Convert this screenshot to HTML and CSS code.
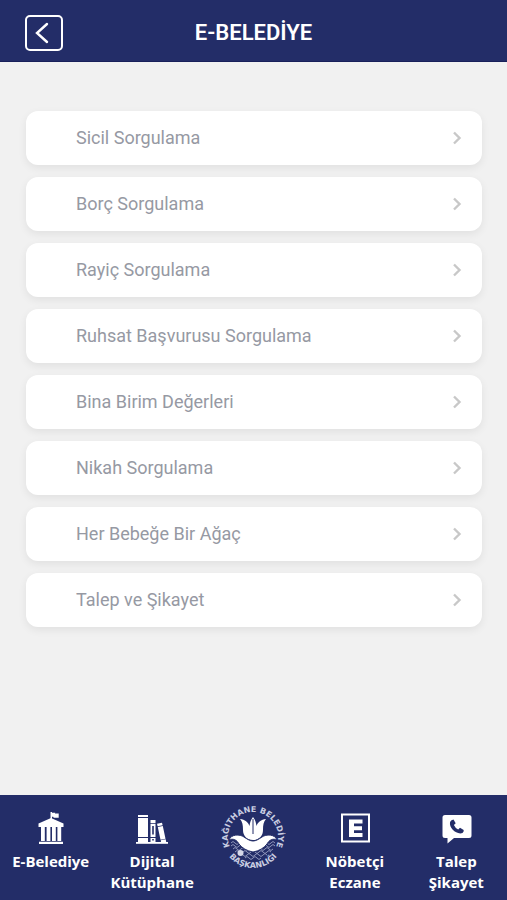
FILE: index.html
```html
<!DOCTYPE html>
<html lang="tr">
<head>
<meta charset="utf-8">
<meta name="viewport" content="width=device-width, initial-scale=1">
<title>E-Belediye</title>
<link rel="stylesheet" href="styles.css">
</head>
<body>
<svg class="symbols" aria-hidden="true">
  <symbol id="chevron" viewBox="0 0 10 14"><path d="M2 1.500 7.500 7 2 12.500" fill="none" stroke="currentColor" stroke-width="2.400"/></symbol>
</svg>
<header class="topbar">
  <button class="back" type="button" aria-label="Geri">
    <svg width="14" height="22" viewBox="0 0 14 22"><path d="M12 2 2 11l10 9" fill="none" stroke="currentColor" stroke-width="2.400" stroke-linecap="round"/></svg>
  </button>
  <h1 class="title">E-BELEDİYE</h1>
</header>
<main class="content">
  <ul class="menu">
    <li><a class="item" href="#">Sicil Sorgulama<svg class="chevron"><use href="#chevron"/></svg></a></li>
    <li><a class="item" href="#">Borç Sorgulama<svg class="chevron"><use href="#chevron"/></svg></a></li>
    <li><a class="item" href="#">Rayiç Sorgulama<svg class="chevron"><use href="#chevron"/></svg></a></li>
    <li><a class="item" href="#">Ruhsat Başvurusu Sorgulama<svg class="chevron"><use href="#chevron"/></svg></a></li>
    <li><a class="item" href="#">Bina Birim Değerleri<svg class="chevron"><use href="#chevron"/></svg></a></li>
    <li><a class="item" href="#">Nikah Sorgulama<svg class="chevron"><use href="#chevron"/></svg></a></li>
    <li><a class="item" href="#">Her Bebeğe Bir Ağaç<svg class="chevron"><use href="#chevron"/></svg></a></li>
    <li><a class="item" href="#">Talep ve Şikayet<svg class="chevron"><use href="#chevron"/></svg></a></li>
  </ul>
</main>
<nav class="tabbar">
  <a class="tab" href="#">
    <svg class="tab-icon" viewBox="0 0 34 34" fill="currentColor">
      <path d="M16.500 1h1.500v.7h3.300l-.4.800h3.800v4.300h-5l-.5-1H18V9h-1.500z"/>
      <path d="M17 7 29.500 12.500v3.500h-25v-3.500z"/>
      <path d="M7 16h3.800v14H7zM12.600 16h3.800v14h-3.800zM18 16h3.800v14H18zM23.400 16h3.800v14h-3.800zM5 30.800h24V33H5z"/>
    </svg>
    <span>E-Belediye</span>
  </a>
  <a class="tab" href="#">
    <svg class="tab-icon" viewBox="0 0 34 34" fill="currentColor">
      <path d="M3 4h10v2H3zM3 7h10v19H3zM3 27h10v4H3z"/>
      <path fill-rule="evenodd" d="M15.500 9h5v3h-5zM15.500 12.800h5V26h-5zM17.200 15v8.500h1.600V15zM15.500 27h5v4h-5zM17.200 28v1.500h1.600V28z"/>
      <path d="m22 12.700 5-1 .6 2.500-5 1zM22.800 16l5-1 2.700 12.800-5 1zM25.700 29.300l5-1 .5 2.700H26z"/>
      <path d="M1 31h32v1.800H1z"/>
    </svg>
    <span>Dijital Kütüphane</span>
  </a>
  <a class="tab tab-logo" href="#" aria-label="Ana sayfa">
    <svg class="logo" viewBox="0 0 70 70">
      <defs>
        <path id="ring-top" d="M22.500 56.600A25 25 0 1 1 47.500 56.600"/>
        <path id="ring-bottom" d="M4 35A31 31 0 0 0 66 35"/>
      </defs>
      <text class="ring"><textPath href="#ring-top" startOffset="50%">KAĞITHANE BELEDİYE</textPath></text>
      <text class="ring"><textPath href="#ring-bottom" startOffset="50%">BAŞKANLIĞI</textPath></text>
      <g class="waves">
        <path d="M13 41q2-3 4 0t4 0 4 0 4 0 4 0 4 0 4 0 4 0 4 0 4 0 4 0"/>
        <path d="M13 44q2-3 4 0t4 0 4 0 4 0 4 0 4 0 4 0 4 0 4 0 4 0 4 0"/>
        <path d="M15 47q2-3 4 0t4 0 4 0 4 0 4 0 4 0 4 0 4 0 4 0 4 0"/>
        <path d="M17 50q2-3 4 0t4 0 4 0 4 0 4 0 4 0 4 0 4 0 4 0"/>
        <path d="M21 53q2-3 4 0t4 0 4 0 4 0 4 0 4 0 4 0"/>
        <path d="M27 56q2-3 4 0t4 0 4 0 4 0"/>
      </g>
      <g class="tulip">
        <path d="M35 38C29 38 25 34 25 28c0-5-.5-8-3-11 5 .5 8 3 9.500 7 .5-4 1.500-6.500 3.500-9 2 2.500 3 5 3.500 9 1.500-4 4.500-6.500 9.500-7-2.500 3-3 6-3 11 0 6-4 10-10 10z"/>
        <path class="bowl" d="M11 38c2-6 11-6 15-3 3 2 6 4 9 4s6-2 9-4c4-3 13-3 15 3-4-2-8 0-10 4-3 4-8 7-14 8-6-1-11-4-14-8-2-4-6-6-10-4z"/>
        <circle class="pearl" cx="22.500" cy="51" r="3"/>
      </g>
      <path class="stem" d="M35 17v15"/>
    </svg>
  </a>
  <a class="tab" href="#">
    <svg class="tab-icon" viewBox="0 0 34 34">
      <path d="M4 3.500h27v27H4z" fill="none" stroke="currentColor" stroke-width="2"/>
      <path d="M11 8.500h13.500v4H16v2.800h8v3.900h-8v2.800h8.500v4H11z" fill="currentColor"/>
    </svg>
    <span>Nöbetçi Eczane</span>
  </a>
  <a class="tab" href="#">
    <svg class="tab-icon" viewBox="0 0 34 34">
      <path d="M6 4h24q2.500 0 2.500 2.500v18Q32.500 27 30 27H15l-6.500 5.500V27H6q-2.500 0-2.500-2.500v-18Q3.500 4 6 4z" fill="currentColor"/>
      <path class="handset" d="m12.500 9.200 2-.8 2.200 3.800-1.800 1.800q1.300 3 4.300 4.500l1.800-1.800 3.700 2.200q.4 1.500-1.200 3.200c-6 2-13.500-5-12.500-10.500q.3-1.500 1.500-2.400z"/>
    </svg>
    <span>Talep Şikayet</span>
  </a>
</nav>
</body>
</html>
```
FILE: styles.css
```css
* {
  box-sizing: border-box;
}

body {
  display: flex;
  flex-direction: column;
  min-height: 100vh;
  margin: 0;
  background: #f1f1f1;
  font-family: Roboto, "Liberation Sans", sans-serif;
}

a {
  color: inherit;
  text-decoration: none;
}

.symbols {
  display: none;
}

.topbar {
  display: grid;
  grid-template-columns: 38px 1fr 38px;
  align-items: center;
  height: 62px;
  padding: 4px 25px 0;
  border-bottom: 1px solid #18205a;
  background: #232d68;
  color: #fff;
}

.back {
  display: flex;
  align-items: center;
  justify-content: center;
  height: 36px;
  padding: 0 4px 0 0;
  border: 2px solid #fff;
  border-radius: 5px;
  background: none;
  color: inherit;
}

.title {
  margin: 0;
  font-size: 22px;
  font-weight: 600;
  line-height: 28px;
  text-align: center;
}

.content {
  flex: 1;
  padding: 49px 25px 49px 26px;
}

.menu {
  display: grid;
  gap: 12px;
  margin: 0;
  padding: 0;
  list-style: none;
}

.item {
  display: flex;
  align-items: center;
  justify-content: space-between;
  height: 54px;
  padding: 0 20px 1px 50px;
  border-radius: 12px;
  background: #fff;
  box-shadow: 0 3px 8px rgba(0, 0, 0, 0.07);
  color: #9699a3;
  font-size: 18px;
}

.chevron {
  width: 10px;
  height: 14px;
  color: #c8c8c8;
}

.tabbar {
  display: grid;
  grid-template-columns: repeat(5, 1fr);
  height: 105px;
  background: #232d68;
  color: #fff;
  font: bold 15px/21px "Open Sans", "Noto Sans", sans-serif;
  text-align: center;
}

.tab {
  display: flex;
  flex-direction: column;
  align-items: center;
  gap: 6px;
  padding: 16px 6px 0;
}

.tab-icon {
  width: 34px;
  height: 34px;
}

.tab-logo {
  padding-top: 7px;
}

.logo {
  width: 70px;
  height: 70px;
}

.ring {
  fill: #c9cde2;
  font: bold 8px "DejaVu Sans", sans-serif;
  text-anchor: middle;
}

.waves {
  fill: none;
  stroke: #8f96bb;
  stroke-width: 1;
}

.tulip {
  fill: #fff;
}

.bowl {
  stroke: #232d68;
  stroke-width: 1;
}

.pearl {
  fill: #d5d8e8;
}

.stem {
  stroke: #232d68;
  stroke-width: 1;
}

.handset {
  fill: #232d68;
}
```
